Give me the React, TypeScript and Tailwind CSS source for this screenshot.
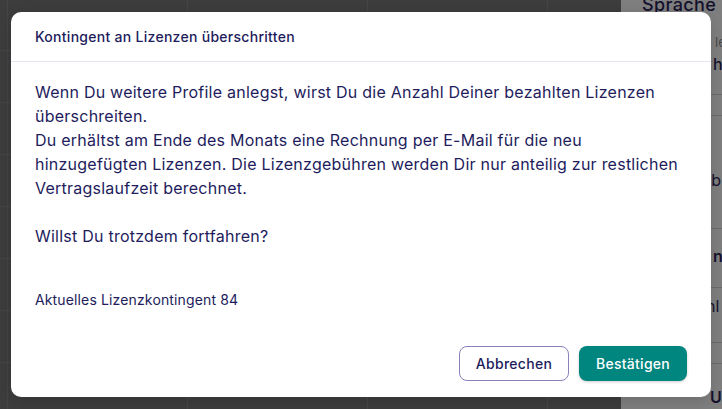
import React from "react";

const font = { fontFamily: "Inter, 'Noto Sans', sans-serif" };

function BackgroundGrid() {
  const rows = Array.from({ length: 9 });
  const cols = Array.from({ length: 5 });
  return (
    <div className="flex-1 bg-[#3d3d3d] overflow-hidden">
      <div className="-ml-[173px] -mt-[2px] flex flex-col">
        {rows.map((_, r) => (
          <div key={r} className="flex h-[52px]">
            {cols.map((_, c) => (
              <div key={c} className="w-[180px] shrink-0 border-l border-t border-[#454545]" />
            ))}
          </div>
        ))}
      </div>
    </div>
  );
}

function SidePanel() {
  return (
    <div className="w-[101px] shrink-0 bg-[#7f7f7f] overflow-hidden text-[#14112e] flex flex-col" style={font}>
      <div className="h-[12px] shrink-0 flex flex-col">
        <div className="pl-[21px] -mt-[7px] text-[18px] leading-[24px] font-medium whitespace-nowrap tracking-[0.02em]">
          Sprache
        </div>
      </div>
      <div className="h-[82px] shrink-0 flex flex-col pt-[22px]">
        <div className="pl-[94px] text-[13px] leading-[16px] text-[#4a4a4a] whitespace-nowrap">le</div>
        <div className="pl-[92px] text-[16px] leading-[24px] mt-[2px] font-medium whitespace-nowrap">h</div>
      </div>
      <div className="h-[21px] shrink-0 border-t border-[#6b6b6b]" />
      <div className="h-[113px] shrink-0 border-t border-[#6b6b6b] pl-[84px] pt-[52px] text-[16px] leading-[24px] whitespace-nowrap">
        rb
      </div>
      <div className="h-[59px] shrink-0 border-t border-[#6b6b6b] pl-[92px] pt-[15px] text-[16px] leading-[24px] font-semibold whitespace-nowrap">
        n
      </div>
      <div className="h-[55px] shrink-0 border-t border-[#6b6b6b] pl-[85px] pt-[6px] text-[16px] leading-[24px] whitespace-nowrap">
        nl
      </div>
      <div className="h-[21px] shrink-0 border-t border-[#6b6b6b]" />
      <div className="h-[60px] shrink-0 border-t border-[#6b6b6b] pl-[89px] pt-[21px] text-[16px] leading-[24px] font-semibold whitespace-nowrap">
        Un
      </div>
    </div>
  );
}

export default function App() {
  return (
    <div className="relative w-[722px] h-[409px] overflow-hidden flex" style={font}>
      <BackgroundGrid />
      <SidePanel />
      <div className="absolute inset-0 flex items-center justify-center">
        <div className="w-[700px] h-[385px] bg-white rounded-[10px] shadow-[0_4px_16px_rgba(0,0,0,0.15)] flex flex-col text-[#221c5c]">
          <div className="px-[24px] py-[14px] border-b border-[#e7e5f2] text-[14px] leading-[21px] font-medium whitespace-nowrap tracking-[0.02em]">
            Kontingent an Lizenzen überschritten
          </div>
          <div className="px-[24px] pt-[18px] flex flex-col flex-1">
            <div className="text-[16px] leading-[24px] whitespace-nowrap tracking-[0.015em]">
              <div>Wenn Du weitere Profile anlegst, wirst Du die Anzahl Deiner bezahlten Lizenzen</div>
              <div>überschreiten.</div>
              <div>Du erhältst am Ende des Monats eine Rechnung per E-Mail für die neu</div>
              <div>hinzugefügten Lizenzen. Die Lizenzgebühren werden Dir nur anteilig zur restlichen</div>
              <div>Vertragslaufzeit berechnet.</div>
              <div className="h-[24px]" />
              <div>Willst Du trotzdem fortfahren?</div>
            </div>
            <div className="mt-[42px] text-[14px] leading-[20px] whitespace-nowrap tracking-[0.01em]">
              Aktuelles Lizenzkontingent 84
            </div>
            <div className="mt-[36px] flex justify-end gap-[10px]">
              <button className="w-[110px] h-[35px] rounded-[8px] border border-[#8b81b8] bg-white text-[14px] font-medium text-[#221c5c] tracking-[0.02em]">
                Abbrechen
              </button>
              <button className="w-[108px] h-[35px] rounded-[8px] bg-[#00857f] text-[14px] font-medium text-white tracking-[0.02em] shadow-[0_1px_3px_rgba(0,0,0,0.2)]">
                Bestätigen
              </button>
            </div>
          </div>
        </div>
      </div>
    </div>
  );
}
